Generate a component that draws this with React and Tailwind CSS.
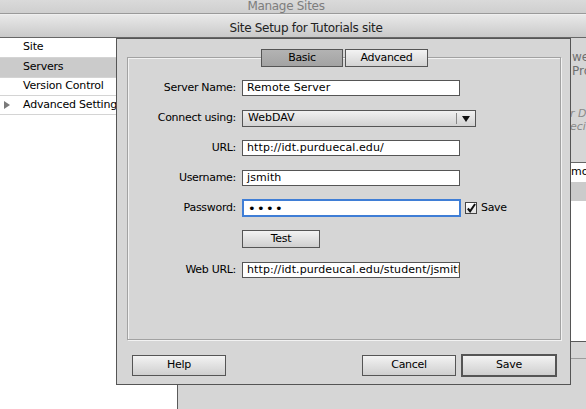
import React from 'react';

const font = "font-['DejaVu_Sans',sans-serif]";

function Field({ label, children, className = '' }) {
  return (
    <div className={`flex items-start h-[30px] ${className}`}>
      <div className="w-[109px] text-right text-[11px] tracking-[-0.3px] leading-[16px] pr-[1px]">{label}</div>
      <div className="ml-[5px] flex items-center">{children}</div>
    </div>
  );
}

function TextBox({ value, focus }) {
  return (
    <div
      className={`w-[218px] h-[16px] bg-white flex items-center pl-[4px] text-[11px] tracking-[0.1px] text-black overflow-hidden whitespace-nowrap ${
        focus ? 'border-2 border-[#3f7ed6] h-[18px] -my-[1px] w-[219px] pl-[3px]' : 'border border-[#555]'
      }`}
    >
      {value}
    </div>
  );
}

function Btn({ children, className = '' }) {
  return (
    <button className={`flex items-center justify-center text-[11px] tracking-[-0.3px] text-black border border-[#555] bg-gradient-to-b from-[#f3f3f3] to-[#cfcfcf] ${className}`}>
      {children}
    </button>
  );
}

export default function App() {
  const sideItems = [
    { label: 'Site', h: 'h-[20px]' },
    { label: 'Servers', h: 'h-[20px]' },
    { label: 'Version Control', h: 'h-[18px]' },
    { label: 'Advanced Settings', h: 'h-[19px]' },
  ];
  return (
    <div className={`relative w-[586px] h-[409px] overflow-hidden bg-[#d6d6d6] text-black ${font}`}>
      {/* Manage Sites title bar (behind) */}
      <div className="h-[14px] bg-gradient-to-b from-[#dadada] to-[#cfcfcf] border-b border-[#9a9a9a] flex justify-center items-end overflow-hidden">
        <span className="text-[12px] tracking-[-0.3px] text-[#7d7d7d] leading-[14px] ml-[-14px]">Manage Sites</span>
      </div>
      <div className="h-px bg-[#efefef]" />
      {/* Site Setup title bar */}
      <div className="h-[23px] bg-gradient-to-b from-[#e9e9e9] to-[#c9c9c9] border-b border-[#666] flex items-center justify-center pl-[26px] pt-[3px]">
        <span className="text-[12px] tracking-[-0.3px] text-[#222]">Site Setup for Tutorials site</span>
      </div>

      <div className="flex h-[371px]">
        {/* sidebar */}
        <div className="w-[178px] shrink-0 bg-white border-r border-[#5a5a5a] flex flex-col">
          {sideItems.map((item, i) => (
            <div
              key={item.label}
              className={`${item.h} flex items-center border-b border-[#d4d4d4] text-[11px] tracking-[-0.2px] whitespace-nowrap relative ${
                i === 1 ? 'bg-[#cbcbcb]' : ''
              }`}
            >
              {i === 3 && (
                <svg className="absolute left-[4px] top-[5px]" width="6" height="8" viewBox="0 0 6 8">
                  <polygon points="0,0 6,4 0,8" fill="#7a7a7a" />
                </svg>
              )}
              <span className="pl-[23px]">{item.label}</span>
            </div>
          ))}
        </div>

        {/* main panel */}
        <div className="flex-1 min-w-0 flex flex-col overflow-hidden">
          <div className="pl-[394px] pt-[12px] text-[12px] leading-[14px] text-[#707070] whitespace-nowrap">
            <div>web pages</div>
            <div>Provider</div>
          </div>
          <div className="pl-[392px] pt-[29px] text-[11px] leading-[13px] italic text-[#8a8a8a] whitespace-nowrap">
            <div>r Dreamweaver</div>
            <div>ecify a server</div>
          </div>
          <div className="mt-[29px] ml-[20px] flex flex-col border-t border-[#666]">
            <div className="h-[19px] bg-white flex items-center pl-[359px] text-[11px] whitespace-nowrap">Remote</div>
            <div className="h-[19px] bg-[#cbcbcb]" />
            <div className="h-[140px] bg-white" />
            <div className="h-[18px] border-t border-[#5a5a5a] border-b border-b-[#9c9c9c] bg-[#d6d6d6]" />
          </div>
        </div>
      </div>

      {/* server dialog (overlay) */}
      <div className="absolute left-[116px] top-[38px] w-[455px] h-[347px] border border-[#555] bg-[#d6d6d6] flex flex-col pl-[10px] pr-[9px] pt-[10px]">
        <div className="relative z-10 flex justify-center gap-[2px] h-[18px] pl-[1px]">
          <div className="w-[82px] h-[18px] border border-[#555] bg-gradient-to-b from-[#b3b3b3] to-[#a3a3a3] flex items-center justify-center text-[11px] tracking-[-0.3px]">
            Basic
          </div>
          <div className="w-[83px] h-[18px] border border-[#555] bg-gradient-to-b from-[#f3f3f3] to-[#d3d3d3] flex items-center justify-center text-[11px] tracking-[-0.3px]">
            Advanced
          </div>
        </div>
        <div className="-mt-[10px] h-[283px] border border-[#a2a2a2] shadow-[inset_1px_1px_0_#f2f2f2,1px_1px_0_#f2f2f2] pt-[22px] flex flex-col">
          <Field label="Server Name:">
            <TextBox value="Remote Server" />
          </Field>
          <Field label="Connect using:">
            <div className="w-[234px] h-[17px] border border-[#555] bg-gradient-to-b from-[#f1f1f1] to-[#d2d2d2] flex items-center text-[11px]">
              <span className="pl-[5px] flex-1">WebDAV</span>
              <div className="w-px h-[11px] bg-[#888]" />
              <svg className="mx-[5px]" width="8" height="6" viewBox="0 0 8 6">
                <polygon points="0,0 8,0 4,6" fill="#111" />
              </svg>
            </div>
          </Field>
          <Field label="URL:">
            <TextBox value="http://idt.purduecal.edu/" />
          </Field>
          <Field label="Username:">
            <TextBox value="jsmith" />
          </Field>
          <Field label="Password:">
            <TextBox value={<span className="text-[13px] tracking-[1.3px] leading-none">••••</span>} focus />
            <div className="ml-[4px] w-[12px] h-[12px] border border-[#444] bg-gradient-to-b from-white to-[#e2e2e2] flex items-center justify-center">
              <svg width="11" height="11" viewBox="0 0 11 11">
                <path d="M2 5.5 L4.5 8.5 L10 0.5" fill="none" stroke="#111" strokeWidth="2.2" />
              </svg>
            </div>
            <span className="ml-[4px] text-[11px] tracking-[-0.3px]">Save</span>
          </Field>
          <Field label="">
            <Btn className="w-[78px] h-[18px]">Test</Btn>
          </Field>
          <Field label="Web URL:" className="mt-[2px]">
            <TextBox value="http://idt.purdeucal.edu/student/jsmith" />
          </Field>
        </div>
        <div className="mt-[14px] flex items-center h-[22px]">
          <Btn className="ml-[5px] w-[94px] h-[21px]">Help</Btn>
          <Btn className="ml-auto w-[94px] h-[21px]">Cancel</Btn>
          <Btn className="ml-[5px] mr-[4px] w-[96px] h-[23px] border-2 border-[#4a4a4a]">Save</Btn>
        </div>
      </div>
    </div>
  );
}
